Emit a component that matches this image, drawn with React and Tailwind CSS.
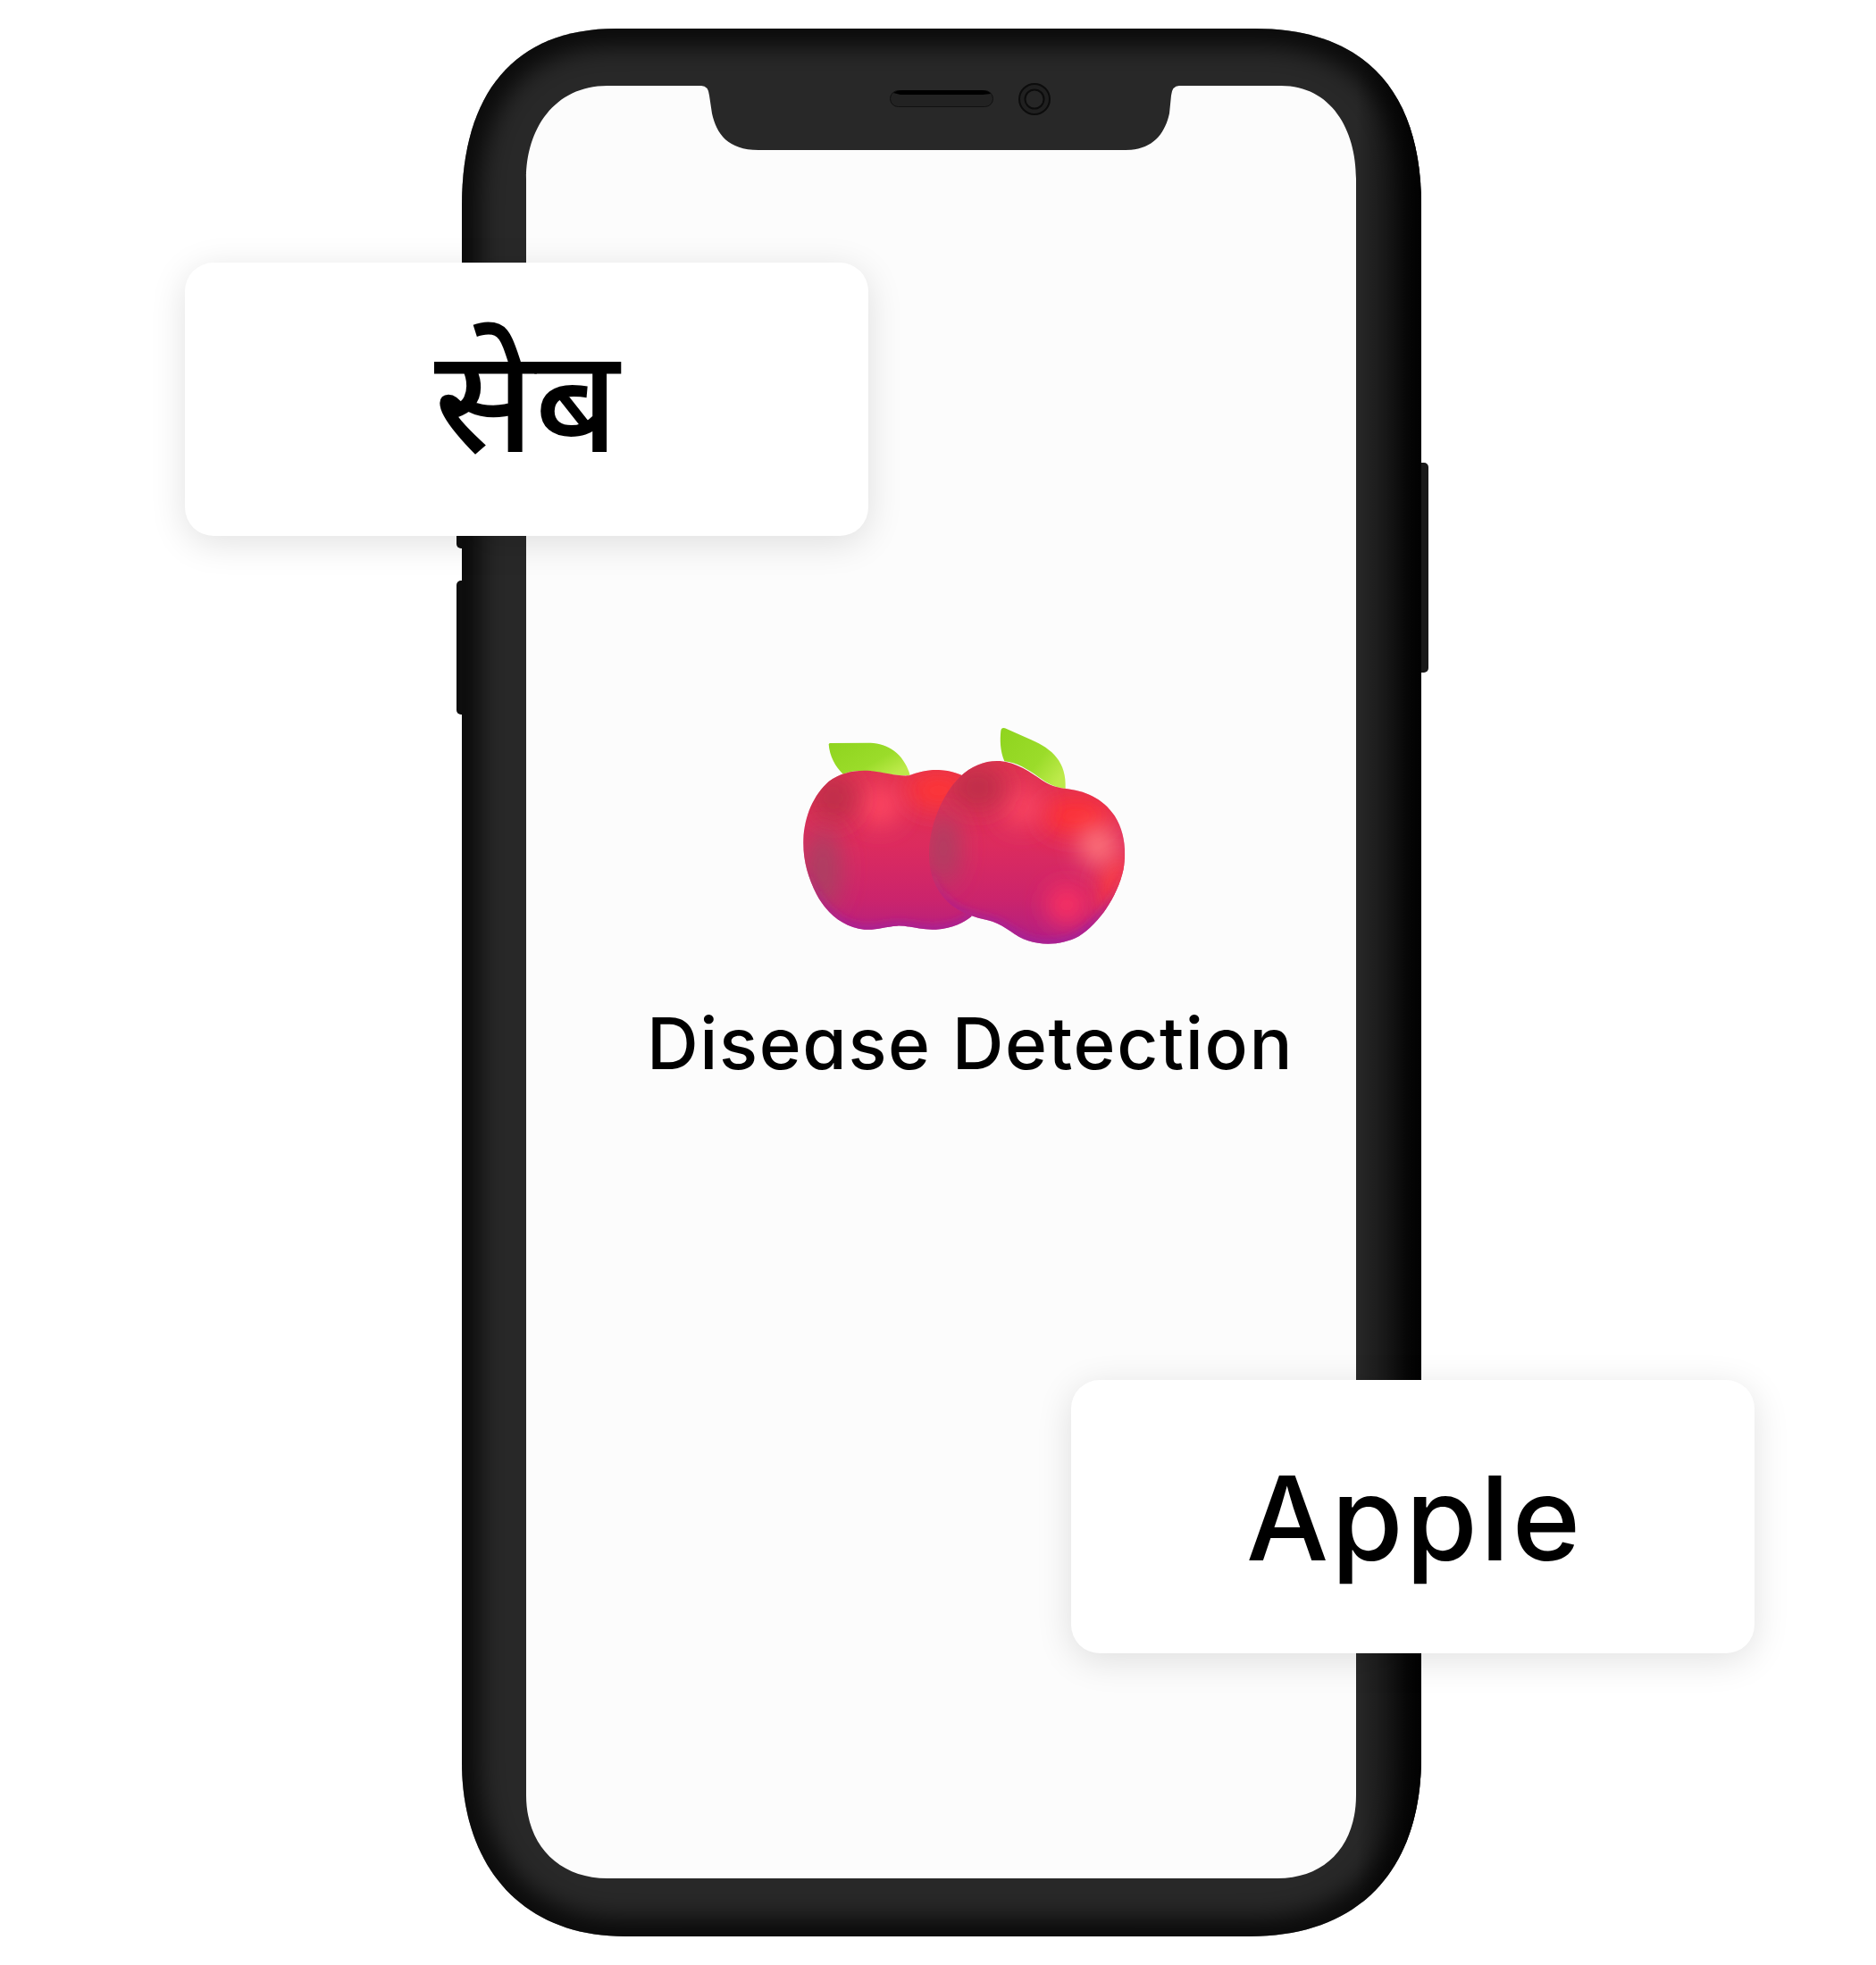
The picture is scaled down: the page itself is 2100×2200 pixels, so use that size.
import React from 'react'

const OUTER = 'M517 230 C517 105 575 32 690 32 L1405 32 C1530 32 1591 105 1591 230 L1591 1967 C1591 2090 1525 2168 1399 2168 L700 2168 C580 2168 517 2085 517 1973 Z'
const SCREEN = 'M589 200 C589 145 620 96 680 96 L785 96 Q793 96 794 107 L797 127 C802 150 815 168 849 168 L1260 168 C1290 168 1304 150 1309 127 L1311 107 Q1312 96 1320 96 L1434 96 C1490 96 1518 145 1518 200 L1518 2010 C1518 2065 1485 2103 1430 2103 L680 2103 C625 2103 589 2065 589 2010 Z'

const LEFT_APPLE = 'M470 235 C500 222 540 214 570 216 C610 218 640 228 680 250 L680 708 C650 730 620 748 560 752 C510 755 470 738 430 740 C390 742 360 755 320 752 C250 745 195 700 160 635 C130 575 113 520 115 450 C118 370 150 300 200 255 C240 225 290 215 340 219 C390 224 430 238 470 235 Z'
const RIGHT_APPLE = 'M990 278 C1060 285 1120 310 1160 370 C1195 425 1200 490 1190 550 C1170 640 1110 730 1040 775 C990 802 925 808 870 790 C825 775 795 740 750 725 C700 712 650 705 600 660 C555 615 535 560 537 490 C540 400 580 300 640 240 C680 200 730 183 775 186 C830 190 880 225 915 250 C940 268 965 275 990 278 Z'
const LEFT_LEAF = 'M200 130 Q201 126 206 126 L340 125 C400 126 455 165 473 234 C420 238 370 222 325 219 C300 218 270 220 248 230 C222 205 203 170 200 130 Z'
const RIGHT_LEAF = 'M778 85 Q780 72 792 76 L880 115 C950 145 1000 190 995 279 C960 275 935 262 905 240 C870 215 830 190 790 187 C775 150 775 115 778 85 Z'

function Blob({ cx, cy, rx, ry, fill, blur = 'b40' }) {
  return <ellipse cx={cx} cy={cy} rx={rx} ry={ry} fill={fill} filter={`url(#${blur})`} />
}

function Apples() {
  return (
    <svg className="block w-[420px] h-[290px] ml-[137px]" viewBox="0 0 1260 870" aria-hidden="true">
      <defs>
        <filter id="b40" x="-100%" y="-100%" width="300%" height="300%"><feGaussianBlur stdDeviation="42" /></filter>
        <filter id="b14" x="-30%" y="-30%" width="160%" height="160%"><feGaussianBlur stdDeviation="14" /></filter>
        <clipPath id="la"><path d={LEFT_APPLE} /></clipPath>
        <clipPath id="ra"><path d={RIGHT_APPLE} /></clipPath>
        <linearGradient id="leaf1" x1="0" y1="0" x2="1" y2="0.7">
          <stop offset="0" stopColor="#8fd41e" />
          <stop offset="0.65" stopColor="#9bdc2a" />
          <stop offset="1" stopColor="#bdea4a" />
        </linearGradient>
        <linearGradient id="body" gradientUnits="userSpaceOnUse" x1="0" y1="200" x2="0" y2="800">
          <stop offset="0" stopColor="#e03450" />
          <stop offset="0.45" stopColor="#dc2b5e" />
          <stop offset="0.75" stopColor="#cb246c" />
          <stop offset="1" stopColor="#b01f84" />
        </linearGradient>
        <linearGradient id="rim" gradientUnits="userSpaceOnUse" x1="0" y1="540" x2="0" y2="760">
          <stop offset="0" stopColor="#a5209a" stopOpacity="0" />
          <stop offset="1" stopColor="#a5209a" stopOpacity="1" />
        </linearGradient>
      </defs>

      <path d={LEFT_LEAF} fill="url(#leaf1)" />
      <g clipPath="url(#la)">
        <rect width="1260" height="870" fill="url(#body)" />
        <Blob cx={570} cy={285} rx={110} ry={65} fill="#ff3436" />
        <Blob cx={370} cy={335} rx={70} ry={65} fill="#ff4662" />
        <Blob cx={215} cy={310} rx={80} ry={85} fill="#bf2f4a" />
        <Blob cx={180} cy={550} rx={60} ry={140} fill="#aa3f62" />
        <path d={LEFT_APPLE} fill="none" stroke="url(#rim)" strokeWidth="26" filter="url(#b14)" />
      </g>

      <path d={RIGHT_LEAF} fill="url(#leaf1)" />
      <g clipPath="url(#ra)">
        <rect width="1260" height="870" fill="url(#body)" />
        <Blob cx={1030} cy={370} rx={120} ry={65} fill="#ff3234" />
        <Blob cx={850} cy={340} rx={70} ry={65} fill="#fa4462" />
        <Blob cx={700} cy={275} rx={95} ry={75} fill="#bf2e4a" />
        <Blob cx={1170} cy={620} rx={60} ry={120} fill="#ff3c3c" />
        <Blob cx={1000} cy={670} rx={65} ry={65} fill="#ff3060" />
        <Blob cx={1105} cy={470} rx={65} ry={65} fill="#ff7a7e" />
        <Blob cx={585} cy={480} rx={50} ry={120} fill="#aa3f62" />
        <path d={RIGHT_APPLE} fill="none" stroke="url(#rim)" strokeWidth="26" filter="url(#b14)" />
      </g>
    </svg>
  )
}

function PhoneFrame() {
  return (
    <svg className="absolute inset-0 w-full h-full" viewBox="510 32 1089 2136" aria-hidden="true">
      <defs>
        <clipPath id="outer"><path d={OUTER} /></clipPath>
        <filter id="edge" x="-10%" y="-10%" width="120%" height="120%"><feGaussianBlur stdDeviation="13" /></filter>
        <linearGradient id="rightShade" x1="0" y1="0" x2="1" y2="0">
          <stop offset="0" stopColor="#000" stopOpacity="0" />
          <stop offset="1" stopColor="#000" stopOpacity="0.85" />
        </linearGradient>
      </defs>

      {/* side buttons */}
      <rect x="511" y="530" width="14" height="84" rx="5" fill="#0e0e0e" />
      <rect x="511" y="650" width="14" height="150" rx="5" fill="#0e0e0e" />
      <rect x="1584" y="518" width="15" height="235" rx="5" fill="#181818" />

      <path d={OUTER} fill="#282828" />
      <g clipPath="url(#outer)">
        <path d={OUTER} fill="none" stroke="#000" strokeWidth="40" opacity="0.75" filter="url(#edge)" />
        <rect x="1518" y="32" width="73" height="2136" fill="url(#rightShade)" />
      </g>
      <path d={SCREEN} fill="#fcfcfc" />

      {/* speaker + camera */}
      <rect x="996.5" y="101.5" width="115" height="18" rx="9" fill="#222" stroke="#111" />
      <path d="M1000 104 Q1004 101 1010 101 L1098 101 Q1106 101 1109 105 L1100 106 L1008 106 Z" fill="#000" />
      <circle cx="1158" cy="111" r="17" fill="#202020" stroke="#0c0c0c" strokeWidth="2" />
      <circle cx="1158" cy="111" r="10.5" fill="#262626" stroke="#0c0c0c" strokeWidth="2" />
    </svg>
  )
}

export default function App() {
  return (
    <div className="relative w-[2100px] h-[2200px] bg-white overflow-hidden pt-8">
      <div className="relative ml-[510px] w-[1089px] h-[2136px]">
        <PhoneFrame />
        <div className="relative pt-[758px] pl-[214px]">
          <Apples />
          <p className="mt-[38px] font-['Inter',sans-serif] [font-feature-settings:'cv11'] font-medium text-[80px] leading-[100px] tracking-[1.6px] text-black whitespace-nowrap">
            Disease Detection
          </p>
        </div>
      </div>

      <div className="absolute left-[207px] top-[294px] w-[765px] h-[306px] rounded-[32px] bg-white shadow-[0_8px_40px_rgba(0,0,0,0.12)] flex items-center justify-center">
        <span className="font-['Noto_Sans','Noto_Sans_Devanagari',sans-serif] font-medium text-[162px] leading-none mb-2 text-black">सेब</span>
      </div>

      <div className="absolute left-[1199px] top-[1545px] w-[765px] h-[306px] rounded-[32px] bg-white shadow-[0_8px_40px_rgba(0,0,0,0.12)] flex items-center justify-center">
        <span className="font-['Inter',sans-serif] [font-feature-settings:'cv11'] font-medium text-[130px] leading-none tracking-[3px] ml-1 mt-1 text-black">Apple</span>
      </div>
    </div>
  )
}
